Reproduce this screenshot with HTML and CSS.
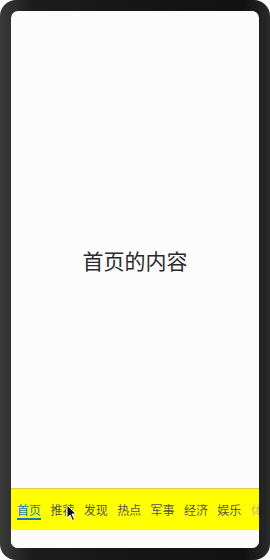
FILE: index.html
```html
<!DOCTYPE html>
<html lang="zh">
<head>
  <meta charset="UTF-8" />
  <meta name="viewport" content="width=device-width, initial-scale=1.0"/>
  <title>首页</title>
  <link rel="stylesheet" href="styles.css">
</head>
<body>

  <div class="phone">
    <div class="screen">
      <section class="content">
        <h2>首页的内容</h2>
      </section>

      <nav class="tabs">
        <a class="tab active">首页</a>
        <a class="tab">推荐</a>
        <a class="tab">发现</a>
        <a class="tab">热点</a>
        <a class="tab">军事</a>
        <a class="tab">经济</a>
        <a class="tab">娱乐</a>
        <a class="tab">体育</a>
      </nav>

      <div class="bottom"></div>
    </div>

    <svg class="cursor" width="11" height="18" viewBox="0 0 11 18">
      <path d="M1 1 L1 14 L4 11 L6.5 16.5 L8.5 15.5 L6 10 L10 10 Z" fill="#111" stroke="#fff" stroke-width="1"/>
    </svg>
  </div>

</body>
</html>
```

FILE: styles.css
```css
* {
  margin: 0; padding: 0; box-sizing: border-box;
  font-family: 'Noto Sans CJK SC', 'Noto Sans', sans-serif;
}

body {
  background: #fff;
  width: 270px;
  height: 560px;
  overflow: hidden;
}

.phone {
  position: relative;
  width: 270px;
  height: 560px;
  padding: 11px 11px 12px 11px;
  border-radius: 16px;
  background: linear-gradient(90deg, #3a3a3a 0%, #1c1c1c 12%, #161616 50%, #111 90%, #2a2a2a 100%);
}

.screen {
  width: 248px;
  height: 537px;
  background: #fcfcfc;
  border-radius: 7px;
  overflow: hidden;
  display: flex;
  flex-direction: column;
}

.content {
  flex: 1;
  display: flex;
  justify-content: center;
  padding-top: 237px;
}

.content h2 {
  font-size: 21px;
  font-weight: 400;
  line-height: 24px;
  color: #2a2a2a;
  height: 24px;
}

.tabs {
  height: 42px;
  background: #ffff00;
  border-top: 1px solid #e3c94a;
  display: flex;
  align-items: center;
  padding-left: 6px;
  overflow: hidden;
  white-space: nowrap;
}

.tab {
  flex: none;
  font-size: 12px;
  line-height: 14px;
  width: 24px;
  margin-right: 9.4px;
  color: #555;
  padding-bottom: 1px;
  border-bottom: 2px solid transparent;
  margin-top: 4px;
}

.tab.active {
  color: #1a74b8;
  border-bottom-color: #1a74b8;
}

.tab:last-child {
  color: #c8c860;
}

.bottom {
  height: 18px;
  background: #fcfcfc;
}

.cursor {
  position: absolute;
  left: 66px;
  top: 504px;
}
```
